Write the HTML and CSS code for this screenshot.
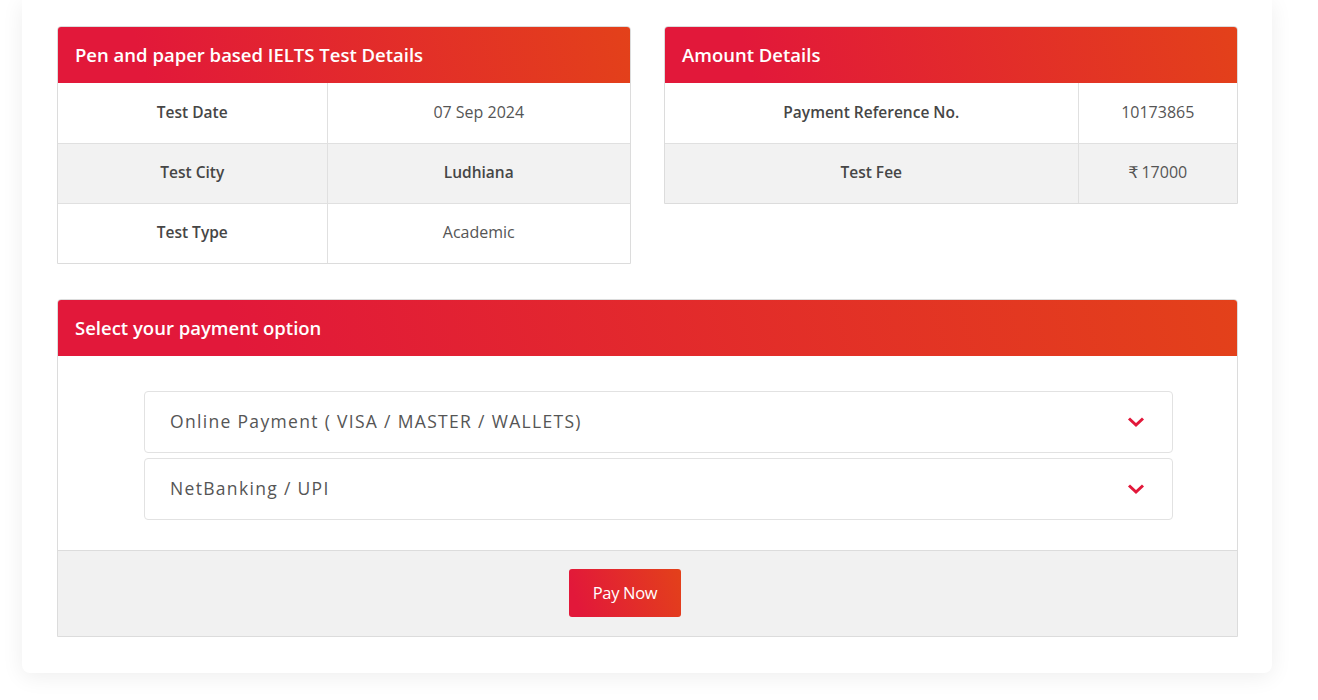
FILE: index.html
```
<!DOCTYPE html>
<html lang="en">
<head>
<meta charset="utf-8">
<title>IELTS Payment</title>
<link rel="stylesheet" href="styles.css">
</head>
<body>
<div class="card">
  <div class="top-row">
    <section class="panel">
      <h2 class="panel-head">Pen and paper based IELTS Test Details</h2>
      <table class="info">
        <tr><td class="lbl l1">Test Date</td><td class="val">07 Sep 2024</td></tr>
        <tr class="alt"><td class="lbl l1">Test City</td><td class="val strong">Ludhiana</td></tr>
        <tr><td class="lbl l1">Test Type</td><td class="val">Academic</td></tr>
      </table>
    </section>
    <section class="panel">
      <h2 class="panel-head">Amount Details</h2>
      <table class="info">
        <tr><td class="lbl l2">Payment Reference No.</td><td class="val">10173865</td></tr>
        <tr class="alt"><td class="lbl l2">Test Fee</td><td class="val"><span class="rupee">₹</span>17000</td></tr>
      </table>
    </section>
  </div>
  <section class="panel pay">
    <h2 class="panel-head">Select your payment option</h2>
    <div class="pay-body">
      <div class="acc"><span>Online Payment ( VISA / MASTER / WALLETS)</span>
        <svg class="chev" width="18" height="12" viewBox="0 0 18 12"><polyline points="2,2.5 9,9 16,2.5" fill="none" stroke="#e2183a" stroke-width="3"/></svg>
      </div>
      <div class="acc"><span>NetBanking / UPI</span>
        <svg class="chev" width="18" height="12" viewBox="0 0 18 12"><polyline points="2,2.5 9,9 16,2.5" fill="none" stroke="#e2183a" stroke-width="3"/></svg>
      </div>
    </div>
    <div class="pay-foot">
      <button class="btn">Pay Now</button>
    </div>
  </section>
</div>
</body>
</html>
```
FILE: styles.css
```
* { box-sizing: border-box; }
html, body { margin: 0; background: #fff; }
body {
  font-family: "Open Sans", "DejaVu Sans", sans-serif;
  color: #444;
  height: 700px;
  overflow: hidden;
}
.card {
  margin-left: 22px;
  width: 1250px;
  background: #fff;
  border-radius: 0 0 8px 8px;
  box-shadow: 0 4px 22px rgba(0,0,0,0.07);
  padding: 26px 34px 36px 35px;
}
.top-row {
  display: grid;
  grid-template-columns: 574px 574px;
  column-gap: 33px;
  align-items: start;
}
.panel {
  border: 1px solid #dcdcdc;
  border-radius: 4px 4px 0 0;
  background: #fff;
}
.panel-head {
  margin: 0;
  height: 56px;
  display: flex;
  align-items: center;
  padding: 0 0 2px 17px;
  color: #fff;
  font-size: 18.5px;
  font-weight: 600;
  letter-spacing: 0;
  background: linear-gradient(75deg, #e2183a 15%, #e3411a 100%);
  border-radius: 3px 3px 0 0;
}
.info {
  width: 100%;
  border-collapse: collapse;
}
.info td {
  height: 60px;
  text-align: center;
  font-size: 16px;
  padding: 0 0 2px;
}
.info tr + tr td { border-top: 1px solid #e0e0e0; }
.info td + td { border-left: 1px solid #e0e0e0; }
.info tr.alt td { background: #f2f2f2; }
.lbl { font-weight: 600; color: #464646; }
.info td.lbl { font-size: 15.5px; }
.l1 { width: 269px; }
.l2 { width: 413px; }
.val { color: #555; }
.info td.val.strong { font-weight: 600; color: #464646; font-size: 15.5px; }
.rupee { margin-right: 3px; }
.pay { margin-top: 35px; }
.pay-body {
  padding: 35px 64px 30px 86px;
  display: flex;
  flex-direction: column;
  gap: 5px;
}
.acc {
  height: 62px;
  border: 1px solid #e2e2e2;
  border-radius: 4px;
  display: flex;
  align-items: center;
  justify-content: space-between;
  padding: 0 27px 0 25px;
  font-size: 17.5px;
  color: #555;
  letter-spacing: 1.32px;
}
.acc span { padding-bottom: 2px; }
.chev { display: block; }
.pay-foot {
  border-top: 1px solid #dcdcdc;
  background: #f1f1f1;
  padding: 18px 0 19px 511px;
}
.btn {
  display: block;
  width: 112px;
  height: 48px;
  border: 0;
  border-radius: 3px;
  background: linear-gradient(70deg, #e2183a 10%, #e3411a 100%);
  color: #fff;
  font-family: inherit;
  font-size: 16.5px;
  letter-spacing: -0.3px;
  padding: 0 0 2px;
}
```
